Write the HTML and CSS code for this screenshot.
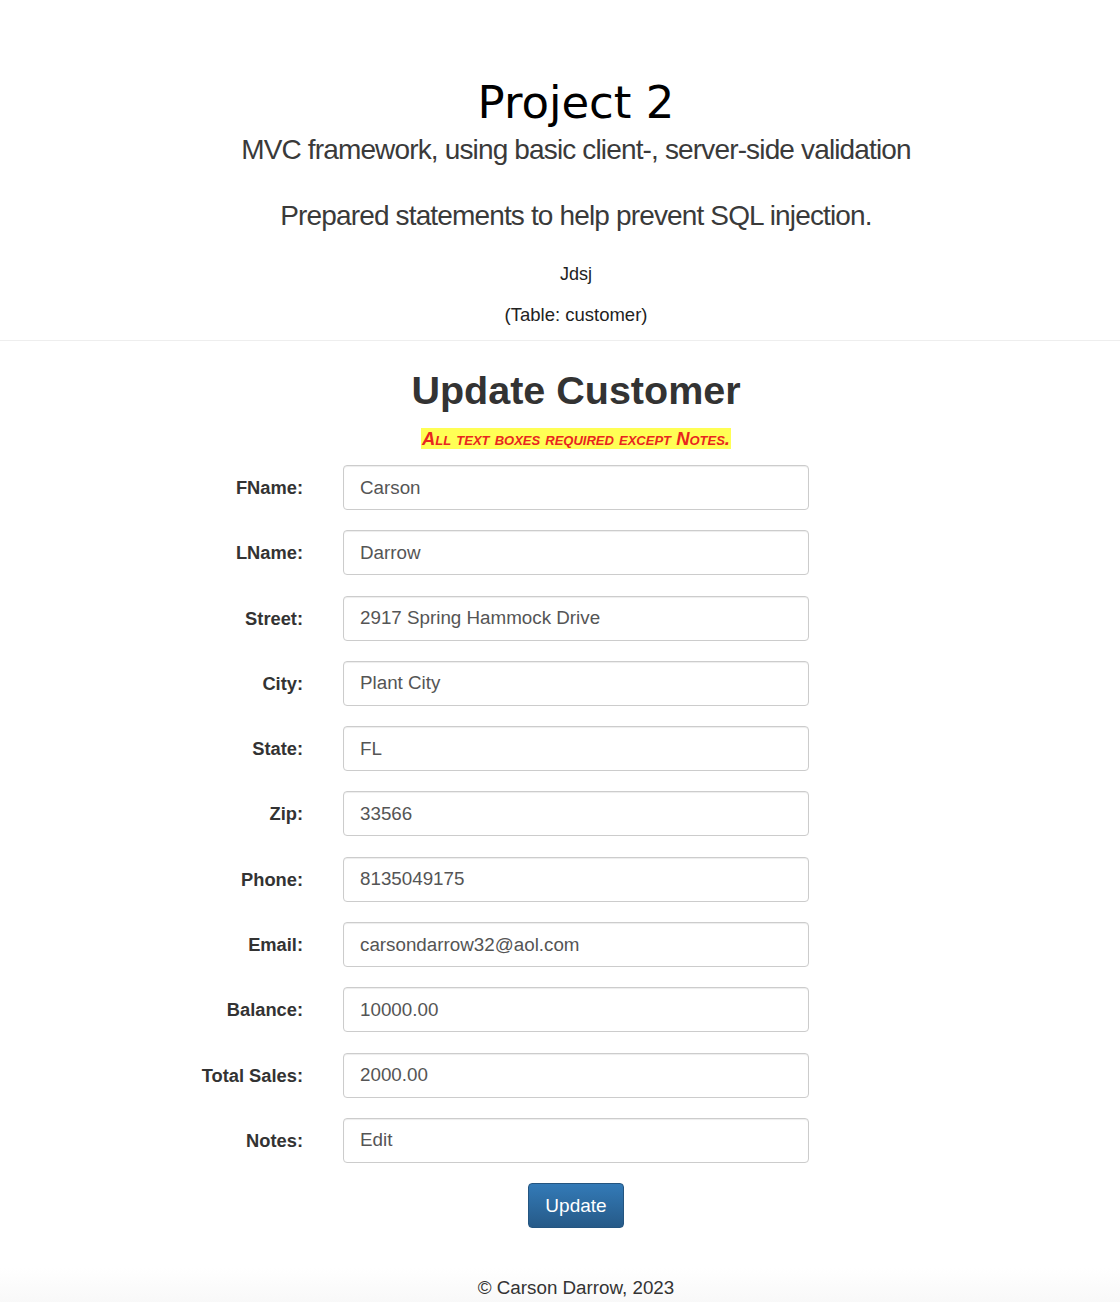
FILE: index.html
```html
<!DOCTYPE html>
<html lang="en">
<head>
<meta charset="utf-8">
<title>Project 2</title>
<link rel="stylesheet" href="styles.css">
</head>
<body>
<header class="page-header">
  <h1 class="title">Project 2</h1>
  <p class="lead">MVC framework, using basic client-, server-side validation</p>
  <p class="lead lead-2">Prepared statements to help prevent SQL injection.</p>
  <p class="meta meta-user">Jdsj</p>
  <p class="meta meta-table">(Table: customer)</p>
</header>

<main class="content">
  <h2 class="form-title">Update Customer</h2>
  <div class="note-wrap"><span class="note">All text boxes required except Notes.</span></div>

  <form class="form">
    <label class="label" for="fname">FName:</label>
    <input class="input" id="fname" type="text" value="Carson">
    <label class="label" for="lname">LName:</label>
    <input class="input" id="lname" type="text" value="Darrow">
    <label class="label" for="street">Street:</label>
    <input class="input" id="street" type="text" value="2917 Spring Hammock Drive">
    <label class="label" for="city">City:</label>
    <input class="input" id="city" type="text" value="Plant City">
    <label class="label" for="state">State:</label>
    <input class="input" id="state" type="text" value="FL">
    <label class="label" for="zip">Zip:</label>
    <input class="input" id="zip" type="text" value="33566">
    <label class="label" for="phone">Phone:</label>
    <input class="input" id="phone" type="text" value="8135049175">
    <label class="label" for="email">Email:</label>
    <input class="input" id="email" type="text" value="carsondarrow32@aol.com">
    <label class="label" for="balance">Balance:</label>
    <input class="input" id="balance" type="text" value="10000.00">
    <label class="label" for="sales">Total Sales:</label>
    <input class="input" id="sales" type="text" value="2000.00">
    <label class="label" for="notes">Notes:</label>
    <input class="input" id="notes" type="text" value="Edit">
    <div class="actions">
      <button class="btn" type="button">Update</button>
    </div>
  </form>
</main>

<footer class="footer">
  <p class="copy">© Carson Darrow, 2023</p>
</footer>
</body>
</html>
```

FILE: styles.css
```css
* { box-sizing: border-box; }

html, body {
  margin: 0;
  padding: 0;
  background: #fff;
}

body {
  font-family: "Liberation Sans", Arial, sans-serif;
  color: #333;
}

.page-header {
  padding: 77px 0 13px 32px;
  text-align: center;
  border-bottom: 1px solid #eee;
}

.title {
  margin: 0;
  font-family: "DejaVu Sans", sans-serif;
  font-weight: normal;
  font-size: 45px;
  line-height: 52px;
  color: #000;
}

.lead {
  margin: 3px 0 0;
  font-size: 28px;
  line-height: 36px;
  font-weight: 300;
  letter-spacing: -0.85px;
  color: #3a3a3a;
}

.lead-2 {
  margin-top: 30px;
}

.meta {
  margin: 0;
  font-size: 18px;
  line-height: 24px;
  color: #222;
}

.meta-user { margin-top: 28px; }
.meta-table { margin-top: 17px; font-size: 18.5px; }

.content {
  padding-left: 32px;
  text-align: center;
}

.form-title {
  margin: 25px 0 0;
  font-size: 39.5px;
  line-height: 48px;
  font-weight: bold;
  color: #333;
}

.note-wrap {
  margin: 14px 0 0;
  height: 21px;
  line-height: 21px;
  display: flex;
  justify-content: center;
}

.note {
  display: block;
  background: #ffff55;
  color: #e8261e;
  font-style: italic;
  font-weight: bold;
  font-variant: small-caps;
  font-size: 18.4px;
  line-height: 21px;
  height: 21px;
  padding: 0 1px;
}

.form {
  display: grid;
  grid-template-columns: 271px 466px;
  column-gap: 40px;
  row-gap: 20.3px;
  margin-top: 16px;
  text-align: left;
}

.label {
  text-align: right;
  font-weight: bold;
  font-size: 18.3px;
  line-height: 45px;
  color: #333;
}

.input {
  height: 45px;
  width: 466px;
  border: 1px solid #ccc;
  border-radius: 4px;
  padding: 0 16px;
  font-family: "Liberation Sans", Arial, sans-serif;
  font-size: 18.8px;
  color: #555;
  background: #fff;
  box-shadow: inset 0 1px 1px rgba(0,0,0,0.075);
}

.actions {
  grid-column: 2;
  display: flex;
  justify-content: center;
}

.btn {
  width: 96px;
  height: 45px;
  border: 1px solid #245580;
  border-radius: 4px;
  background: linear-gradient(to bottom, #337ab7 0%, #265a88 100%);
  color: #fff;
  font-family: "Liberation Sans", Arial, sans-serif;
  font-size: 19px;
  cursor: pointer;
}

.footer {
  margin-top: 40px;
  padding: 8px 0 20px 32px;
  text-align: center;
  background: linear-gradient(to bottom, #fff 0%, #f5f5f5 100%);
}

.copy {
  margin: 0;
  font-size: 18.8px;
  line-height: 24px;
  color: #333;
}
```
